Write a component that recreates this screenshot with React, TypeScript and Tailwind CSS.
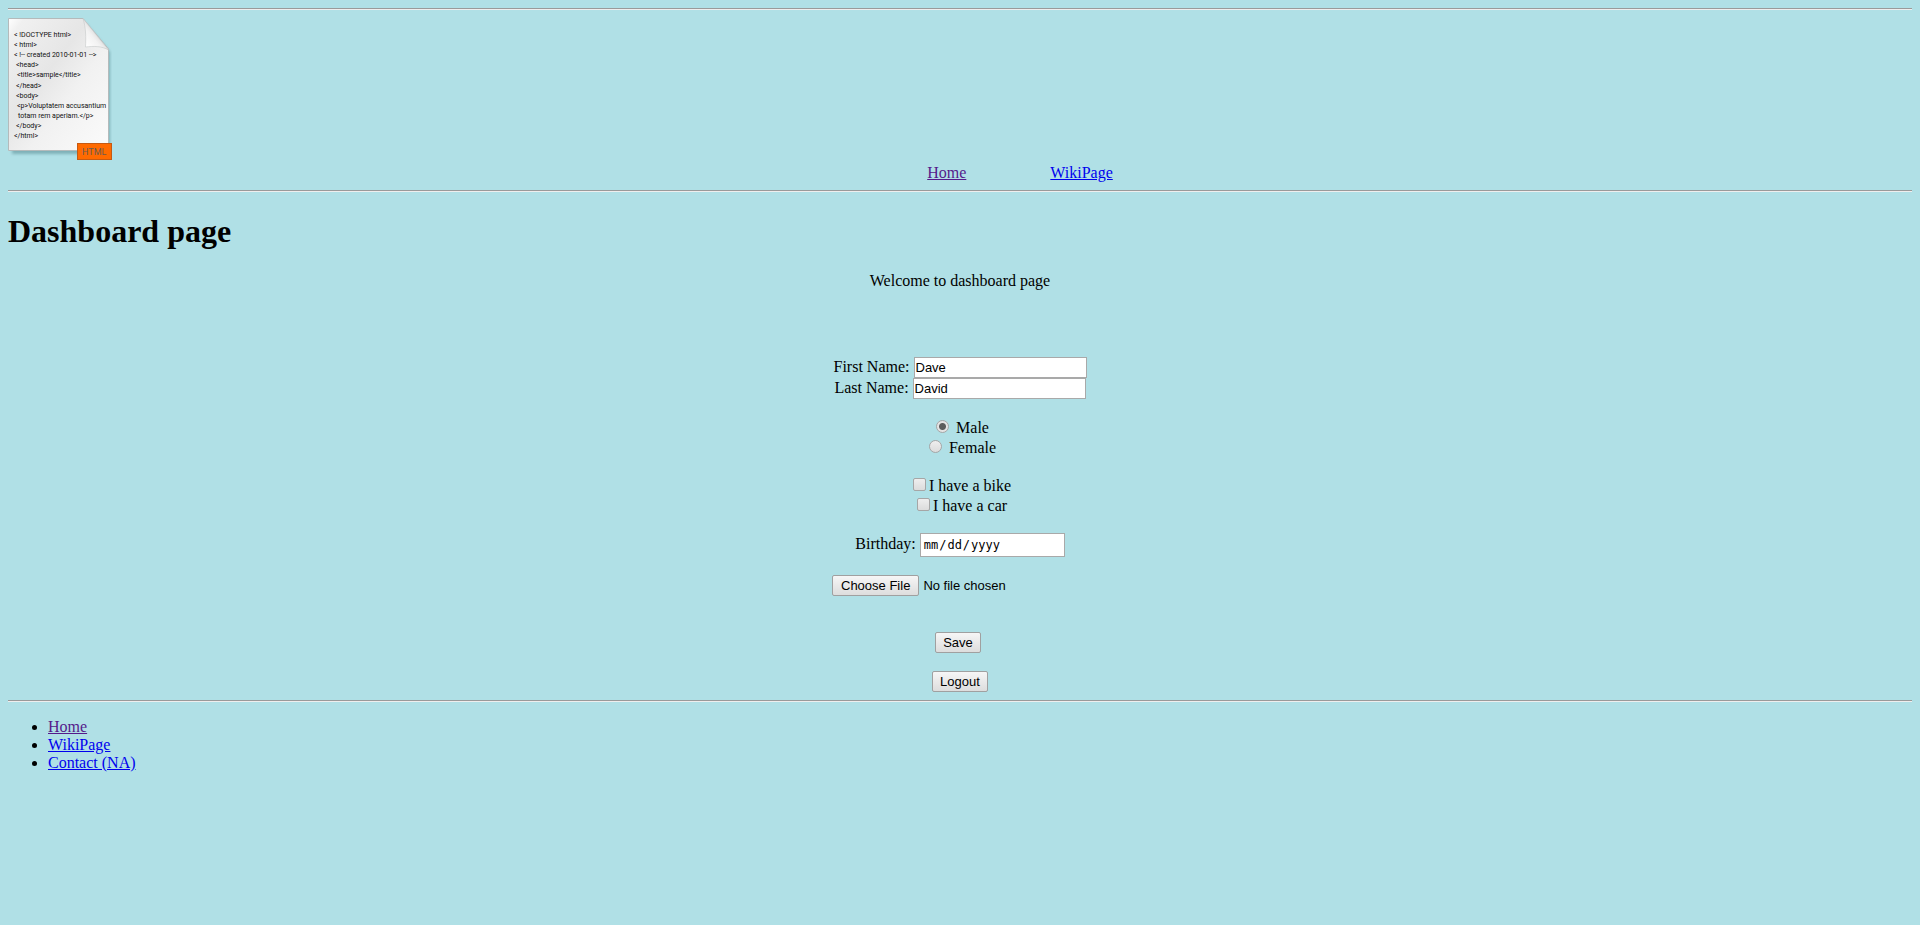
import React from "react";

const sourceLines: { x: number; text: string }[] = [
  { x: 6, text: "< !DOCTYPE html>" },
  { x: 6, text: "< html>" },
  { x: 6, text: "< !-- created 2010-01-01 -->" },
  { x: 8, text: "<head>" },
  { x: 9, text: "<title>sample</title>" },
  { x: 8, text: "</head>" },
  { x: 8, text: "<body>" },
  { x: 9, text: "<p>Voluptatem accusantium" },
  { x: 10, text: "totam rem aperiam.</p>" },
  { x: 8, text: "</body>" },
  { x: 6, text: "</html>" },
];

function HtmlLogo() {
  return (
    <svg width="104" height="142" viewBox="0 0 104 142" role="img" aria-label="HTML document">
      <defs>
        <linearGradient id="paper" x1="0" y1="0" x2="1" y2="1">
          <stop offset="0" stopColor="#ffffff" />
          <stop offset="0.08" stopColor="#f0f0f0" />
          <stop offset="0.4" stopColor="#e6e6e6" />
          <stop offset="0.6" stopColor="#f1f1f1" />
          <stop offset="1" stopColor="#fbfbfb" />
        </linearGradient>
        <linearGradient id="fold" x1="0.1" y1="0.9" x2="0.6" y2="0.4">
          <stop offset="0" stopColor="#ffffff" />
          <stop offset="0.6" stopColor="#f2f2f2" />
          <stop offset="1" stopColor="#d6d6d6" />
        </linearGradient>
        <filter id="soft" x="-10%" y="-10%" width="120%" height="120%">
          <feGaussianBlur stdDeviation="1.5" />
        </filter>
      </defs>
      <path d="M4 6H78L102 34V136H4Z" fill="#5f9299" opacity="0.6" filter="url(#soft)" />
      <path d="M0.5 0.5H75L100.500 31V132.500H0.500Z" fill="url(#paper)" stroke="#b4babb" strokeWidth="1" />
      <path d="M75 0.500C78 10 78 20 77.500 29C86 28 94 28 100.500 32Z" fill="url(#fold)" stroke="#c4c8c8" strokeWidth="0.600" />
      <g fill="#111111" fontSize="7" fontFamily="Roboto, sans-serif">
        {sourceLines.map((line, i) => (
          <text key={i} x={line.x} y={19 + i * 10.1}>
            {line.text}
          </text>
        ))}
      </g>
      <rect x="69" y="125" width="35" height="17" fill="#c65a12" />
      <rect x="70" y="126" width="33" height="15" fill="#ff6a00" />
      <text x="74" y="137" fontSize="9" fill="#6b5a50" fontFamily="Roboto, sans-serif">
        HTML
      </text>
    </svg>
  );
}

function Rule() {
  return <hr className="h-[2px] border-0 border-t border-b border-t-[#9a9a9a] border-b-[#eeeeee]" />;
}

const buttonClass =
  "h-[21px] rounded-[2px] border border-[#a0a0a0] bg-linear-to-b from-[#f6f6f6] to-[#dddddd] px-[7px] font-['Liberation_Sans',sans-serif] text-[13px] leading-[19px] text-black";
const textFieldClass =
  "ml-1 h-[21px] w-[173px] border border-[#a9a9a9] bg-white px-px font-['Liberation_Sans',sans-serif] text-[13px] leading-[19px] text-black";
const radioClass =
  "mt-px mr-[7px] ml-[5px] size-[13px] appearance-none rounded-full border border-[#a6a6a6] bg-linear-to-b from-[#eeeeee] to-[#dcdcdc] checked:bg-[radial-gradient(circle,#5c5c5c_0_3px,#e4e4e4_4px)]";
const checkClass =
  "mt-px mr-[3px] ml-1 size-[13px] appearance-none rounded-[2px] border border-[#a6a6a6] bg-linear-to-b from-[#eeeeee] to-[#dcdcdc] checked:bg-none checked:bg-[#5c5c5c]";
const visitedLink = "text-[#551a8b] underline";
const freshLink = "text-[#0000ee] underline";

export default function App() {
  return (
    <div className="min-h-screen bg-[#b0e0e6] p-2 font-['Liberation_Serif',serif] text-[16px] leading-[18px] text-black">
      <Rule />
      <header className="pt-2 pb-2">
        <HtmlLogo />
        <nav className="mt-1 flex justify-center gap-[84px] pl-[120px]">
          <a href="#home" className={visitedLink}>Home</a>
          <a href="#wiki" className={freshLink}>WikiPage</a>
        </nav>
      </header>
      <Rule />

      <main className="pb-2">
        <h1 className="mt-[21px] mb-[22px] text-[32px] leading-[37px] font-bold">Dashboard page</h1>
        <p className="text-center">Welcome to dashboard page</p>

        <form className="mt-[67px] flex flex-col items-center" onSubmit={(e) => e.preventDefault()}>
          <div className="flex items-baseline">
            <label htmlFor="first">First Name:</label>
            <input id="first" type="text" defaultValue="Dave" className={textFieldClass} />
          </div>
          <div className="flex items-baseline">
            <label htmlFor="last">Last Name:</label>
            <input id="last" type="text" defaultValue="David" className={textFieldClass} />
          </div>

          <div className="mt-5 flex flex-col items-center">
            <label className="flex h-5 items-start">
              <input type="radio" name="gender" value="male" defaultChecked className={radioClass} />
              Male
            </label>
            <label className="flex h-5 items-start">
              <input type="radio" name="gender" value="female" className={radioClass} />
              Female
            </label>
          </div>

          <div className="mt-[18px] flex flex-col items-center">
            <label className="flex h-5 items-start">
              <input type="checkbox" name="bike" className={checkClass} />
              I have a bike
            </label>
            <label className="flex h-5 items-start">
              <input type="checkbox" name="car" className={checkClass} />
              I have a car
            </label>
          </div>

          <div className="mt-4 flex items-center">
            <label htmlFor="birthday" className="pb-[2px]">Birthday:</label>
            <input
              id="birthday"
              type="date"
              className="ml-1 h-6 w-[145px] border border-[#a9a9a9] bg-white px-[2px] font-['DejaVu_Sans_Mono',monospace] text-[12px] leading-[18px] text-black [&::-webkit-calendar-picker-indicator]:hidden"
            />
          </div>

          <input
            type="file"
            aria-label="Choose File"
            className="mt-[18px] h-[21px] w-64 font-['Liberation_Sans',sans-serif] text-[13px] leading-[21px] text-black file:mr-1 file:h-[21px] file:rounded-[2px] file:border file:border-solid file:border-[#a0a0a0] file:bg-linear-to-b file:from-[#f6f6f6] file:to-[#dddddd] file:px-2 file:text-[13px] file:leading-[19px] file:text-black"
          />

          <div className="mt-9 pr-1">
            <button type="submit" className={`${buttonClass} block`}>Save</button>
          </div>
          <button type="button" className={`${buttonClass} mt-[18px]`}>Logout</button>
        </form>
      </main>

      <Rule />
      <footer className="pt-4">
        <ul className="list-disc pl-10">
          <li><a href="#home" className={visitedLink}>Home</a></li>
          <li><a href="#wiki" className={freshLink}>WikiPage</a></li>
          <li><a href="#contact" className={freshLink}>Contact (NA)</a></li>
        </ul>
      </footer>
    </div>
  );
}
